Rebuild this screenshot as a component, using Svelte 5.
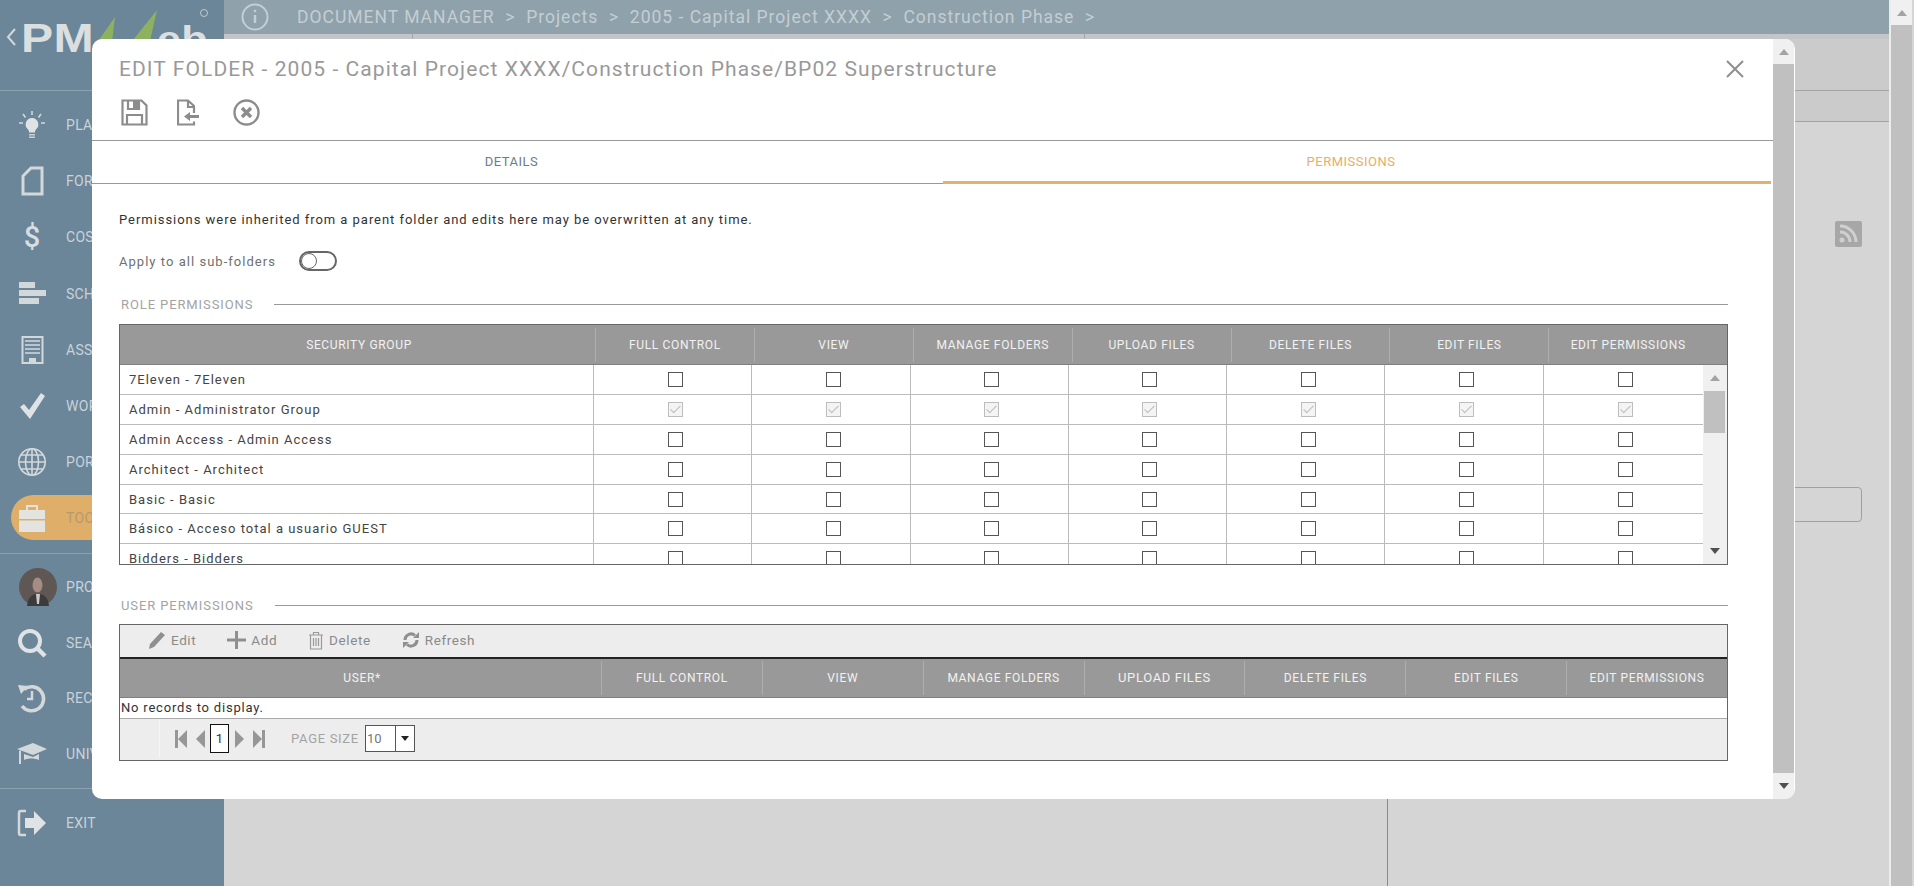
<script>
  const roleCols = ['FULL CONTROL', 'VIEW', 'MANAGE FOLDERS', 'UPLOAD FILES', 'DELETE FILES', 'EDIT FILES', 'EDIT PERMISSIONS'];

  const groups = [
    { name: '7Eleven - 7Eleven' },
    { name: 'Admin - Administrator Group', locked: true },
    { name: 'Admin Access - Admin Access' },
    { name: 'Architect - Architect' },
    { name: 'Basic - Basic' },
    { name: 'Básico - Acceso total a usuario GUEST' },
    { name: 'Bidders - Bidders' }
  ];
</script>

<div class="page">
  <aside class="sidebar">
    <div class="logo">
      <svg width="224" height="90" viewBox="0 0 224 90">
        <path d="M15 29 8 37l7 8" fill="none" stroke="#d3d8da" stroke-width="2" />
        <text x="21" y="52" class="logo-text" font-size="41" textLength="73" lengthAdjust="spacingAndGlyphs">PM</text>
        <path d="M92 50 115 17l-4 33zM125 50l32-40-9 40z" fill="#8cb25f" />
        <text x="157" y="52" class="logo-text" font-size="36" textLength="51" lengthAdjust="spacingAndGlyphs">eb</text>
        <circle cx="204" cy="13" r="3.500" fill="none" stroke="#c3ccd1" />
      </svg>
    </div>

    <nav class="group">
      <div class="item">
        <svg class="icon" viewBox="0 0 32 32">
          <path d="M16 9a6.500 6.500 0 0 0-4 11.500c1 1 1 2 1 3h6c0-1 0-2 1-3A6.500 6.500 0 0 0 16 9z" fill="#dfe3e5" />
          <path d="M13 25h6v1.500h-6zM13 27.500h6V29h-6z" fill="#c9d1d5" />
          <path d="M16 2v4M7 5l2.500 3.500M25 5l-2.500 3.500M3 14h4M25 14h4" stroke="#d3d8da" stroke-width="1.600" />
        </svg>
        <span>PLANNING</span>
      </div>
      <div class="item">
        <svg class="icon" viewBox="0 0 32 32">
          <path d="M15 3h11v26H7V11z" fill="none" stroke="#d3d8da" stroke-width="3" />
        </svg>
        <span>FORMS</span>
      </div>
      <div class="item">
        <span class="icon dollar">$</span>
        <span>COSTS</span>
      </div>
      <div class="item">
        <svg class="icon" viewBox="0 0 32 32">
          <path d="M3 4h16v6H3zM3 12h27v6H3zM3 20h20v6H3z" fill="#d3d8da" />
        </svg>
        <span>SCHEDULE</span>
      </div>
      <div class="item">
        <svg class="icon" viewBox="0 0 32 32">
          <path d="M6.500 3h20v26h-20z" fill="none" stroke="#d3d8da" stroke-width="2" />
          <path d="M9 6h15v2H9zM9 10h15v2H9zM9 14h15v2H9zM9 18h15v2H9z" fill="#b9c5cc" />
          <path d="M13 24h7v5h-7z" fill="#d3d8da" />
        </svg>
        <span>ASSETS</span>
      </div>
      <div class="item">
        <svg class="icon" viewBox="0 0 32 32">
          <path d="M4 17l4-3 5 6L25 3l4 3-15 23z" fill="#dfe3e5" />
        </svg>
        <span>WORKFLOW</span>
      </div>
      <div class="item">
        <svg class="icon" viewBox="0 0 32 32" fill="none" stroke="#d3d8da" stroke-width="1.600">
          <circle cx="16" cy="16" r="13.200" />
          <ellipse cx="16" cy="16" rx="6.500" ry="13.200" />
          <path d="M16 3v26M3 16h26M5 9h22M5 23h22" />
        </svg>
        <span>PORTFOLIO</span>
      </div>
      <div class="item active">
        <svg class="icon" viewBox="0 0 32 32">
          <path d="M11 8V4h10v4" fill="none" stroke="#e3e3df" stroke-width="2" />
          <path d="M3 8h26v9H3zM3 18.500h26V30H3z" fill="#e3e3df" />
        </svg>
        <span>TOOLS</span>
      </div>
    </nav>

    <nav class="group lower">
      <div class="item">
        <svg class="avatar" viewBox="0 0 38 38">
          <circle cx="19" cy="19" r="19" fill="#5e5754" />
          <path d="M8 38c1-9 5-12 11-12s10 3 11 12z" fill="#3b3a3c" />
          <ellipse cx="18.500" cy="17" rx="5" ry="7.500" fill="#a58d84" />
          <path d="M17 26h4l-1 10h-2z" fill="#cfc9c6" />
        </svg>
        <span>PROFILE</span>
      </div>
      <div class="item">
        <svg class="icon" viewBox="0 0 32 32" fill="none" stroke="#dfe3e5">
          <circle cx="14" cy="14" r="10" stroke-width="4" />
          <path d="M21 21l8 8" stroke-width="4.500" />
        </svg>
        <span>SEARCH</span>
      </div>
      <div class="item">
        <svg class="icon" viewBox="0 0 32 32" fill="none" stroke="#d3d8da">
          <path d="M8 7.500A12 12 0 1 1 6 24" stroke-width="3.500" />
          <path d="M2 3l10 1-7 8z" fill="#d3d8da" stroke="none" />
          <path d="M16 9v8h-5" stroke-width="2.500" />
        </svg>
        <span>RECENT</span>
      </div>
      <div class="item">
        <svg class="icon" viewBox="0 0 32 32">
          <path d="M1 11 17 5l14 6-14 6z" fill="#d3d8da" />
          <path d="M8 16v6c4-2 10-2 15 0v-6l-6 3zM3 13v13h2V12z" fill="#d3d8da" />
        </svg>
        <span>UNIVERSITY</span>
      </div>
    </nav>

    <div class="group">
      <div class="item">
        <svg class="icon" viewBox="0 0 32 32">
          <path d="M10 4H5a2 2 0 0 0-2 2v20a2 2 0 0 0 2 2h5" fill="none" stroke="#d3d8da" stroke-width="2.500" />
          <path d="M9 11h9V4l12 12-12 12v-7H9z" fill="#dfe3e5" />
        </svg>
        <span>EXIT</span>
      </div>
    </div>
  </aside>

  <main class="main">
    <header class="topbar">
      <svg class="info" viewBox="0 0 28 28" fill="none" stroke="#c4ced3" stroke-width="2">
        <circle cx="14" cy="14" r="12.500" />
        <path d="M14 12v8" stroke-width="2.500" />
        <circle cx="14" cy="8" r="1.300" fill="#c4ced3" stroke="none" />
      </svg>
      <span class="crumbs">DOCUMENT MANAGER &nbsp;&gt;&nbsp; Projects &nbsp;&gt;&nbsp; 2005 - Capital Project XXXX &nbsp;&gt;&nbsp; Construction Phase &nbsp;&gt;</span>
    </header>
    <div class="strip"><i></i><i></i></div>
    <div class="behind">
      <div class="left-pane"></div>
      <div class="right-pane">
        <div class="band"><div class="band-a"></div><div class="band-b"></div></div>
        <div class="feed">
          <svg class="rss" viewBox="0 0 27 26">
            <rect width="27" height="26" rx="2" fill="#a7a7a7" />
            <circle cx="7" cy="19" r="2.500" fill="#d0d0d0" />
            <path d="M5 11a10 10 0 0 1 10 10M5 5a16 16 0 0 1 16 16" fill="none" stroke="#d0d0d0" stroke-width="3" />
          </svg>
        </div>
        <div class="box-row"><div class="box"></div></div>
      </div>
    </div>
  </main>

  <div class="page-scroll">
    <div class="arrow-cell"><b class="up"></b></div>
    <div class="page-track"></div>
  </div>

  <div class="modal">
    <div class="modal-main">
      <div class="modal-head">
        <div class="title-row">
          <h1>EDIT FOLDER - 2005 - Capital Project XXXX/Construction Phase/BP02 Superstructure</h1>
          <svg class="close" viewBox="0 0 18 18"><path d="M1 1l16 16M17 1 1 17" stroke="#8f8f8f" stroke-width="2" /></svg>
        </div>
        <div class="actions">
          <svg viewBox="0 0 27 27" fill="none" stroke="#8c8c8c" stroke-width="2.200">
            <path d="M1.500 1.500h19l5 5v19h-24z" />
            <path d="M6 25.500V16h15v9.500" />
            <path d="M7 2v8h11V2" />
            <path d="M12 2v8h6V2z" fill="#8c8c8c" stroke="none" />
          </svg>
          <svg viewBox="2 0 27 27" fill="none" stroke="#8c8c8c" stroke-width="2.200">
            <path d="M19 14V7l-6-5.500H3v24h16v-3" />
            <path d="M13 2v6h6" />
            <path d="M9 17.500l6-4.500v3h9v3h-9v3z" fill="#8c8c8c" stroke="none" />
          </svg>
          <svg viewBox="0 0 27 27" fill="none" stroke="#8c8c8c">
            <circle cx="13.500" cy="13.500" r="12" stroke-width="2.400" />
            <path d="M9 9l9 9M18 9l-9 9" stroke-width="3.400" />
          </svg>
        </div>
      </div>

      <div class="tabs">
        <div class="tab">DETAILS</div>
        <div class="tab selected">PERMISSIONS</div>
      </div>

      <div class="content">
        <p class="notice">Permissions were inherited from a parent folder and edits here may be overwritten at any time.</p>
        <div class="apply">
          <span>Apply to all sub-folders</span>
          <div class="toggle"><i></i></div>
        </div>

        <div class="section"><span>ROLE PERMISSIONS</span><i></i></div>
        <div class="grid-box role-box">
          <div class="thead role-head">
            <div>SECURITY GROUP</div>
            {#each roleCols as col}
              <div>{col}</div>
            {/each}
          </div>
          <div class="tbody">
            <div class="rows">
              {#each groups as g}
                <div class="row">
                  <div class="name">{g.name}</div>
                  {#each roleCols as col}
                    <div class="cell">
                      <input type="checkbox" aria-label={col} checked={g.locked} disabled={g.locked} />
                    </div>
                  {/each}
                </div>
              {/each}
            </div>
            <div class="row-scroll">
              <div class="mini-arrow"><b class="up"></b></div>
              <div class="mini-thumb"></div>
              <div class="mini-arrow down-cell"><b class="down"></b></div>
            </div>
          </div>
        </div>

        <div class="section users"><span>USER PERMISSIONS</span><i></i></div>
        <div class="grid-box">
          <div class="toolbar">
            <div class="tool">
              <svg viewBox="0 0 17 18" width="17" height="18"><path d="M0 18l1-5L12 1l4 3L5 16z" fill="#8f8f8f" /></svg>
              <span>Edit</span>
            </div>
            <div class="tool">
              <svg viewBox="0 0 19 18" width="19" height="18"><path d="M8 0h3v7.500h8v3h-8V18H8v-7.500H0v-3h8z" fill="#8f8f8f" /></svg>
              <span>Add</span>
            </div>
            <div class="tool">
              <svg viewBox="0 0 16 19" width="16" height="19" fill="none" stroke="#9a9a9a" stroke-width="1.200">
                <path d="M1 4h14M5.500 4V1.500h5V4M2.500 4v14h11V4M5.500 7v8M8 7v8M10.500 7v8" />
              </svg>
              <span>Delete</span>
            </div>
            <div class="tool">
              <svg viewBox="0 0 18 18" width="18" height="18" fill="none" stroke="#8f8f8f" stroke-width="3">
                <path d="M3 9a6 6 0 0 1 10-4.500M15 9a6 6 0 0 1-10 4.500" />
                <path d="M17 1v6h-6zM1 17v-6h6z" fill="#8f8f8f" stroke="none" />
              </svg>
              <span>Refresh</span>
            </div>
          </div>
          <div class="thead user-head">
            <div>USER*</div>
            {#each roleCols as col}
              <div class:wide={col === 'UPLOAD FILES'}>{col}</div>
            {/each}
          </div>
          <div class="empty">No records to display.</div>
          <div class="pager">
            <div class="pager-gap"></div>
            <div class="pager-nav">
              <svg viewBox="0 0 12 18" width="12" height="18"><path d="M0 0h3v18H0zM12 0v18L3 9z" fill="#979797" /></svg>
              <svg viewBox="0 0 9 18" width="9" height="18"><path d="M9 0v18L0 9z" fill="#979797" /></svg>
              <div class="page-no">1</div>
              <svg viewBox="0 0 9 18" width="9" height="18"><path d="M0 0v18l9-9z" fill="#979797" /></svg>
              <svg viewBox="0 0 12 18" width="12" height="18"><path d="M12 0H9v18h3zM0 0v18l9-9z" fill="#979797" /></svg>
            </div>
            <span class="size-label">PAGE SIZE</span>
            <div class="size-select">
              <span>10</span>
              <div class="size-btn"><b class="down tiny"></b></div>
            </div>
          </div>
        </div>
      </div>
    </div>

    <div class="modal-scroll">
      <div class="arrow-cell"><b class="up"></b></div>
      <div class="modal-track"></div>
      <div class="arrow-cell bottom"><b class="down"></b></div>
    </div>
  </div>
</div>

<style>
  :global(body) {
    margin: 0;
    font-family: Roboto, "Liberation Sans", sans-serif;
  }

  .page {
    display: flex;
    width: 1914px;
    height: 886px;
    position: relative;
    overflow: hidden;
    background: #d5d5d5;
  }

  /* sidebar */
  .sidebar {
    flex: none;
    width: 224px;
    background: #6b8599;
    color: #c9d3d9;
    font-size: 14px;
    letter-spacing: 0.3px;
  }

  .logo {
    height: 90px;
    border-bottom: 1px solid #8ba1b1;
  }

  .logo svg {
    display: block;
  }

  .logo-text {
    font-family: "Liberation Sans", sans-serif;
    font-weight: 700;
    fill: #dcdfe0;
  }

  .group {
    padding: 6px 0;
    border-bottom: 1px solid #8ba1b1;
  }

  .group:last-child {
    border-bottom: none;
  }

  .item {
    display: flex;
    align-items: center;
    height: 56.2px;
    padding-left: 16px;
  }

  .lower .item {
    height: 55.5px;
  }

  .item > span:last-child {
    margin-left: 18px;
  }

  .icon {
    flex: none;
    width: 32px;
    height: 32px;
  }

  .dollar {
    color: #d8dde0;
    font-size: 29px;
    font-weight: 500;
    line-height: 32px;
    text-align: center;
    letter-spacing: 0;
  }

  .avatar {
    flex: none;
    width: 38px;
    height: 38px;
    margin-right: -9px;
    margin-left: 3px;
  }

  .active {
    position: relative;
    color: #b79a6c;
  }

  .active::before {
    content: '';
    position: absolute;
    left: 11px;
    right: 0;
    top: 5px;
    height: 45px;
    border-radius: 23px 0 0 23px;
    background: #dfae69;
  }

  .active > * {
    position: relative;
  }

  /* page behind the dialog */
  .main {
    flex: 1;
    display: flex;
    flex-direction: column;
  }

  .topbar {
    display: flex;
    align-items: center;
    height: 34px;
    flex: none;
    background: #8fa1ab;
    color: #c4ced3;
  }

  .info {
    width: 28px;
    height: 28px;
    margin-left: 17px;
  }

  .crumbs {
    margin-left: 28px;
    font-size: 17.500px;
    white-space: pre;
    letter-spacing: 1px;
  }

  .strip {
    flex: none;
    height: 5px;
    display: flex;
    background: #c2c6c8;
  }

  .strip i {
    width: 1px;
    background: #a5a8aa;
    margin-left: 188px;
  }

  .strip i + i {
    margin-left: 671px;
  }

  .behind {
    flex: 1;
    display: flex;
  }

  .left-pane {
    width: 1163px;
    flex: none;
  }

  .right-pane {
    flex: 1;
    border-left: 1px solid #8a8a8a;
  }

  .band {
    height: 83px;
    background: #cbcbcb;
  }

  .band-a {
    height: 51px;
    border-bottom: 1px solid #a2a2a2;
  }

  .band-b {
    height: 30px;
    border-bottom: 1px solid #a2a2a2;
  }

  .feed {
    display: flex;
    justify-content: flex-end;
    padding: 99px 27px 0 0;
  }

  .rss {
    width: 27px;
    height: 26px;
  }

  .box-row {
    display: flex;
    justify-content: flex-end;
    padding: 240px 27px 0 0;
  }

  .box {
    width: 300px;
    height: 33px;
    border: 1px solid #a0a0a0;
    border-radius: 4px;
  }

  .page-scroll {
    flex: none;
    width: 21px;
    margin: 0 2px 0 0;
    border-left: 2px solid #ececec;
    display: flex;
    flex-direction: column;
    background: #f1f1f1;
  }

  .page-track {
    flex: 1;
    background: #c0c0c0;
  }

  .arrow-cell {
    flex: none;
    height: 25px;
    display: flex;
    align-items: center;
    justify-content: center;
    background: #f0f0f0;
  }

  b.up,
  b.down {
    display: block;
    width: 0;
    height: 0;
    border-left: 5.500px solid transparent;
    border-right: 5.500px solid transparent;
  }

  b.up {
    border-bottom: 6px solid #a3a3a3;
  }

  b.down {
    border-top: 6px solid #505050;
  }

  b.tiny {
    border-left-width: 4.500px;
    border-right-width: 4.500px;
    border-top-width: 5px;
    border-top-color: #222;
  }

  /* dialog */
  .modal {
    position: absolute;
    left: 92px;
    top: 39px;
    width: 1703px;
    height: 760px;
    display: flex;
    background: #fff;
    border-radius: 10px;
    overflow: hidden;
  }

  .modal-main {
    flex: 1;
    min-width: 0;
  }

  .modal-scroll {
    flex: none;
    width: 21px;
    margin-right: 1px;
    display: flex;
    flex-direction: column;
  }

  .modal-track {
    flex: 1;
    background: #c0c0c0;
  }

  .modal-scroll .bottom {
    height: 26px;
  }

  .modal-head {
    height: 101px;
    border-bottom: 1px solid #999;
  }

  .title-row {
    display: flex;
    align-items: center;
    justify-content: space-between;
    height: 60px;
    padding: 0 29px 0 27px;
  }

  h1 {
    margin: 0;
    font-size: 21px;
    font-weight: 400;
    color: #999;
    letter-spacing: 1.07px;
  }

  .close {
    width: 18px;
    height: 18px;
  }

  .actions {
    display: flex;
    gap: 29px;
    padding-left: 29px;
  }

  .actions svg {
    width: 27px;
    height: 27px;
  }

  .tabs {
    display: flex;
    height: 43px;
  }

  .tab {
    flex: none;
    width: 851px;
    display: flex;
    align-items: center;
    justify-content: center;
    box-sizing: border-box;
    padding: 0 12px 2px 0;
    border-bottom: 1px solid #999;
    font-size: 13px;
    letter-spacing: 0.5px;
    color: #6d7c86;
  }

  .tab.selected {
    width: 828px;
    padding-bottom: 0;
    border-bottom: 3px solid #e0b26d;
    color: #e8ae62;
  }

  .content {
    padding: 0 45px 0 27px;
  }

  .notice {
    margin: 27px 0 0;
    font-size: 13px;
    line-height: 18px;
    letter-spacing: 0.96px;
    color: #333;
  }

  .apply {
    display: flex;
    align-items: center;
    gap: 23px;
    height: 20px;
    margin-top: 22px;
    font-size: 13px;
    letter-spacing: 1.03px;
    color: #707070;
  }

  .toggle {
    box-sizing: border-box;
    width: 38px;
    height: 20px;
    border: 2px solid #666;
    border-radius: 10px;
    padding: 0;
  }

  .toggle i {
    display: block;
    box-sizing: border-box;
    width: 16px;
    height: 16px;
    border: 1.500px solid #666;
    border-radius: 50%;
    background: #fff;
  }

  .section {
    display: flex;
    align-items: center;
    gap: 21px;
    height: 18px;
    margin-top: 24px;
    padding-left: 2px;
    font-size: 13px;
    letter-spacing: 0.9px;
    color: #a3a3a3;
  }

  .section i {
    flex: 1;
    height: 1px;
    background: #999;
  }

  .section.users {
    margin-top: 31px;
  }

  .grid-box {
    margin-top: 10px;
    border: 1px solid #666;
  }

  .role-box {
    margin-top: 11px;
  }

  .thead {
    display: grid;
    height: 39px;
    align-items: center;
    background: #999;
    border-bottom: 1px solid #808080;
    font-size: 12px;
    font-weight: 400;
    letter-spacing: 0.65px;
    color: #f2f2f2;
    text-align: center;
  }

  .thead > div {
    height: 34px;
    line-height: 34px;
    border-left: 1px solid #adadad;
  }

  .thead > div:first-child {
    border-left: none;
    padding-left: 3px;
  }

  .role-head {
    grid-template-columns: 475px repeat(6, 158.9px) 1fr;
  }

  .role-head > div:last-child {
    padding-right: 20px;
  }

  .user-head {
    grid-template-columns: 481px repeat(7, 1fr);
    height: 38px;
  }

  .wide {
    font-size: 13px;
  }

  .tbody {
    display: flex;
    height: 199px;
    overflow: hidden;
  }

  .rows {
    flex: 1;
    min-width: 0;
  }

  .row {
    display: grid;
    grid-template-columns: 473px repeat(6, 158.25px) 1fr;
    box-sizing: border-box;
    height: 30px;
    border-bottom: 1px solid #bbb;
  }

  .row:nth-child(5) {
    height: 29px;
  }

  .name {
    padding-left: 9px;
    font-size: 13px;
    line-height: 29px;
    letter-spacing: 1px;
    color: #444;
    white-space: nowrap;
  }

  .cell {
    display: flex;
    align-items: center;
    justify-content: center;
    padding-left: 5px;
    border-left: 1px solid #bbb;
  }

  input[type='checkbox'] {
    appearance: none;
    position: relative;
    flex: none;
    box-sizing: border-box;
    width: 15px;
    height: 15px;
    margin: 0;
    border: 1.500px solid #555;
    background: #fff;
  }

  input[type='checkbox']:disabled {
    border-color: #bdbdbd;
    border-width: 1px;
    background: #f4f4f4;
  }

  input[type='checkbox']:checked::after {
    content: '';
    position: absolute;
    left: 4px;
    top: 0;
    width: 4px;
    height: 9px;
    border: solid #bcbcbc;
    border-width: 0 1.500px 1.500px 0;
    transform: rotate(45deg);
  }

  .row-scroll {
    flex: none;
    width: 24px;
    display: flex;
    flex-direction: column;
    background: #f0f0f0;
  }

  .mini-arrow {
    height: 26px;
    display: flex;
    align-items: center;
    justify-content: center;
  }

  .mini-thumb {
    height: 42px;
    margin: 0 2px 0 1px;
    background: #c0c0c0;
  }

  .down-cell {
    margin-top: auto;
  }

  .toolbar {
    display: flex;
    align-items: center;
    box-sizing: border-box;
    height: 34px;
    padding: 0 0 2px 29px;
    gap: 31px;
    background: #ededed;
    border-bottom: 2px solid #222;
    font-size: 13.500px;
    letter-spacing: 0.6px;
    color: #8a8a8a;
  }

  .tool {
    display: flex;
    align-items: center;
    gap: 5px;
  }

  .empty {
    box-sizing: border-box;
    height: 21px;
    padding-left: 1px;
    border-bottom: 1px solid #aaa;
    font-size: 13px;
    line-height: 20px;
    letter-spacing: 0.8px;
    color: #333;
  }

  .pager {
    display: flex;
    align-items: center;
    box-sizing: border-box;
    height: 41px;
    padding-bottom: 2px;
    background: #ededed;
    font-size: 13px;
    color: #a3a3a3;
    letter-spacing: 0.7px;
  }

  .pager-gap {
    width: 39px;
    height: 100%;
    border-right: 1px solid #f6f6f6;
  }

  .pager-nav {
    display: flex;
    align-items: center;
    gap: 6px;
    margin-left: 15px;
  }

  .pager-nav svg:nth-child(2),
  .pager-nav svg:last-child {
    margin-left: 3px;
  }

  .page-no {
    box-sizing: border-box;
    width: 19px;
    height: 29px;
    margin-left: -1px;
    border: 1px solid #111;
    background: #fff;
    color: #333;
    font-size: 13px;
    line-height: 27px;
    text-align: center;
    letter-spacing: 0;
  }

  .size-label {
    margin-left: 26px;
  }

  .size-select {
    display: flex;
    box-sizing: border-box;
    width: 50px;
    height: 27px;
    margin-left: 6px;
    border: 1px solid #555;
    background: #fff;
    color: #777;
    line-height: 26px;
    letter-spacing: 0;
  }

  .size-select span {
    width: 28px;
    padding-left: 1px;
  }

  .size-btn {
    flex: 1;
    display: flex;
    align-items: center;
    justify-content: center;
    border-left: 1px solid #555;
  }
</style>
